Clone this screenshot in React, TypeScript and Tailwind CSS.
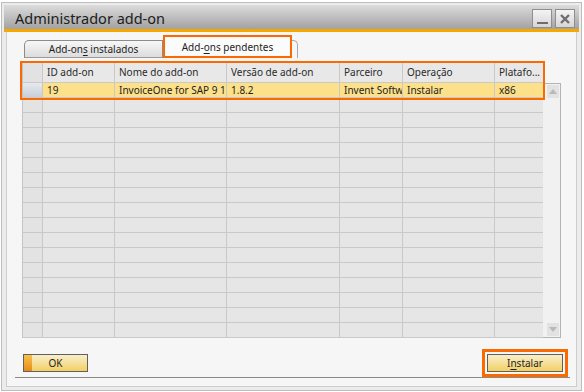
import React from "react";

const font = { fontFamily: '"Noto Sans", "Open Sans", sans-serif' };

const columns = [
  { key: "id", label: "ID add-on", w: "w-[72px]" },
  { key: "name", label: "Nome do add-on", w: "w-[112px]" },
  { key: "version", label: "Versão de add-on", w: "w-[113px]" },
  { key: "partner", label: "Parceiro", w: "w-[63px]" },
  { key: "op", label: "Operação", w: "w-[92px]" },
  { key: "platform", label: "Platafo...", w: "w-[49px]" },
];

const firstRow: Record<string, string> = {
  id: "19",
  name: "InvoiceOne for SAP 9 1",
  version: "1.8.2",
  partner: "Invent Softw",
  op: "Instalar",
  platform: "x86",
};

const emptyRows = Array.from({ length: 16 });

function TitleButton({ kind }: { kind: "min" | "close" }) {
  return (
    <div className="w-[20px] h-[19px] border border-[#8e8e8e] bg-gradient-to-b from-[#f4f4f4] to-[#d6d6d6] flex items-center justify-center">
      {kind === "min" ? (
        <div className="w-[11px] h-[2px] bg-[#6e6e6e] mt-[9px]" />
      ) : (
        <svg width="12" height="12" viewBox="0 0 12 12">
          <path d="M2 2 L10 10 M10 2 L2 10" stroke="#6e6e6e" strokeWidth="2.4" />
        </svg>
      )}
    </div>
  );
}

function Cell({ w, children, className = "" }: { w: string; children?: React.ReactNode; className?: string }) {
  return (
    <div className={`${w} shrink-0 border-r border-b border-[#c9c9c9] pl-[4px] overflow-hidden whitespace-nowrap leading-[14px] ${className}`}>
      {children}
    </div>
  );
}

export default function App() {
  return (
    <div className="w-[584px] h-[392px] bg-white pt-[2px] pl-[1px] text-[10px] text-[#1e1e1e]" style={font}>
      <div className="w-[581px] h-[389px] border border-[#bdbdbd] bg-[#ececec] p-[2px] flex flex-col">
        {/* title bar */}
        <div className="h-[24px] shrink-0 bg-gradient-to-b from-[#dcdcdc] to-[#a2a2a2] flex items-center justify-between pl-[11px] pr-[4px]">
          <span className="text-[14.5px] text-[#202020] leading-none mt-[2px]">Administrador add-on</span>
          <div className="flex gap-[3px] mt-[3px]">
            <TitleButton kind="min" />
            <TitleButton kind="close" />
          </div>
        </div>
        <div className="h-[3px] shrink-0 bg-[#f6a800]" />

        {/* body */}
        <div className="flex-1 px-[2px] pb-[1px] flex">
          <div className="flex-1 border-x border-b border-[#cdcdcd] bg-[#f6f6f6] pl-[13px] pr-[8px] pt-[3px] flex flex-col">
            {/* tabs */}
            <div className="h-[23px] flex items-end ml-[4px]">
              <div className="w-[139px] h-[18px] border border-[#8c8c8c] border-b-[#9a9a9a] rounded-tl-[5px] bg-gradient-to-b from-[#f7f7f7] to-[#dcdcdc] flex items-center justify-center">
                <span>
                  Add-on<u className="underline-offset-2">s</u>{" "}instalados
                </span>
              </div>
              <div className="w-[129px] h-[23px] border-2 border-[#fb6a00] p-[1px] pb-0 flex">
                <div className="flex-1 bg-[#fbfbfb] flex items-center justify-center">
                  <span>
                    Add-<u className="underline-offset-2">o</u>ns pendentes
                  </span>
                </div>
              </div>
              <div className="w-[6px] h-[18px] border-r border-t border-[#a8a8a8] rounded-tr-[5px]" />
            </div>

            {/* grid */}
            <div className="mt-[5px] ml-[2px] w-[539px] h-[275px] flex relative">
              <div className="w-[521px] border-l border-[#c4c4c4] flex flex-col">
                <div className="h-[20px] flex bg-[#e8e8e8] text-[#2a2a2a]">
                  <Cell w="w-[20px]" className="bg-[#e2e2e2]" />
                  {columns.map((c) => (
                    <Cell key={c.key} w={c.w} className="leading-[19px]">
                      {c.label}
                    </Cell>
                  ))}
                </div>
                <div className="h-[15px] flex bg-[#fde08a]">
                  <Cell w="w-[20px]" className="bg-gradient-to-b from-[#e7eaf0] to-[#c9cdd6] border-[#b8bcc4]" />
                  {columns.map((c) => (
                    <Cell key={c.key} w={c.w} className="pl-[3px]">
                      {firstRow[c.key]}
                    </Cell>
                  ))}
                </div>
                {emptyRows.map((_, i) => (
                  <div key={i} className="h-[15px] flex bg-[#e6e6e6]">
                    <Cell w="w-[20px]" className="bg-[#e3e3e3]" />
                    {columns.map((c) => (
                      <Cell key={c.key} w={c.w} />
                    ))}
                  </div>
                ))}
              </div>
              {/* scrollbar */}
              <div className="w-[18px] mt-[20px] border-t border-r border-b border-[#b4b4b4] bg-[#f1f1f1] flex flex-col justify-between items-center py-[1px] pl-[2px]">
                <div className="w-[12px] h-[13px] bg-[#e2e2e2] flex items-center justify-center">
                  <svg width="8" height="5" viewBox="0 0 8 5">
                    <path d="M0 5 L4 0 L8 5 Z" fill="#b9b9b9" />
                  </svg>
                </div>
                <div className="w-[12px] h-[13px] bg-[#e2e2e2] flex items-center justify-center">
                  <svg width="8" height="5" viewBox="0 0 8 5">
                    <path d="M0 0 L4 5 L8 0 Z" fill="#b9b9b9" />
                  </svg>
                </div>
              </div>
              {/* highlight over header and first row */}
              <div className="absolute left-[-2px] top-[-2px] w-[525px] h-[39px] border-2 border-[#fb6a00] pointer-events-none" />
            </div>

            {/* buttons */}
            <div className="mt-[11px] flex items-center justify-between">
              <div className="ml-[3px] w-[65px] h-[18px] border border-[#606060] bg-gradient-to-b from-[#f9eecb] to-[#f2d05e] relative flex items-center justify-center">
                <div className="absolute left-0 top-0 bottom-0 w-[8px] bg-gradient-to-b from-[#f6c24a] to-[#e98a12]" />
                <span className="relative">OK</span>
              </div>
              <div className="w-[86px] h-[28px] border-[3px] border-[#fb6a00] p-[2px]">
                <div className="w-full h-full border border-[#606060] bg-gradient-to-b from-[#f9eecb] to-[#f2d05e] flex items-center justify-center">
                  <span>
                    I<u className="underline-offset-2">n</u>stalar
                  </span>
                </div>
              </div>
            </div>
            <div className="h-[1px] bg-[#8a8a8a] ml-[-5px] mr-[-2px]" />
          </div>
        </div>
      </div>
    </div>
  );
}
